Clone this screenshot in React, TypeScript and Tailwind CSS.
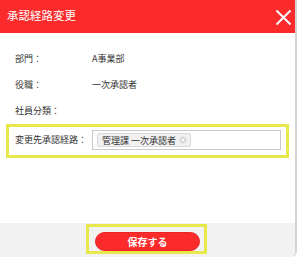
import React from "react";

export default function App() {
  return (
    <div className="w-[300px] h-[257px] bg-white overflow-hidden font-['Noto_Sans_CJK_JP','Liberation_Sans',sans-serif]">
      <div className="w-[297px] h-full flex flex-col border-r-2 border-[#d4d4d4] rounded-br-[6px] overflow-hidden">
        {/* header */}
        <div className="h-[33px] shrink-0 bg-[#fc2b2b] flex items-center justify-between pl-[7px] pr-[3px]">
          <span className="text-white text-[11.5px] leading-none -mt-[2px]">承認経路変更</span>
          <svg width="17" height="17" viewBox="0 0 17 17" className="mt-[1px]">
            <path d="M1.5 1.5 L15.5 15.5 M15.5 1.5 L1.5 15.5" stroke="#fff" strokeWidth="2" fill="none" />
          </svg>
        </div>
        {/* body */}
        <div className="flex-1 bg-white pt-[13px] text-[9px] text-[#333]">
          <div className="h-[26px] flex items-center pl-[15px]">
            <span className="w-[77px]">部門：</span>
            <span>A事業部</span>
          </div>
          <div className="h-[26px] flex items-center pl-[15px]">
            <span className="w-[77px]">役職：</span>
            <span>一次承認者</span>
          </div>
          <div className="h-[26px] flex items-center pl-[15px]">
            <span className="w-[77px]">社員分類：</span>
          </div>
          <div className="mx-[6px] w-[283px] border-[3px] border-[#e8e84c] pt-[3px] pb-[5px] pl-[6px] pr-[5px] flex items-center">
            <span className="w-[77px] shrink-0">変更先承認経路：</span>
            <div className="flex-1 h-[20px] border border-[#c9c9c9] bg-white flex items-center pl-[4px]">
              <div className="h-[14px] flex items-center gap-[3px] bg-[#f1f1f1] border border-[#dadada] rounded-[2px] pl-[4px] pr-[3px] text-[9px] text-[#333]">
                <span className="leading-none">管理課 一次承認者</span>
                <svg width="8" height="8" viewBox="0 0 8 8">
                  <circle cx="4" cy="4" r="3.5" fill="#d6d6d6" />
                  <path d="M2.5 2.5 L5.5 5.5 M5.5 2.5 L2.5 5.5" stroke="#fff" strokeWidth="1" />
                </svg>
              </div>
            </div>
          </div>
        </div>
        {/* footer */}
        <div className="h-[34px] shrink-0 bg-[#f2f2f2] pt-[1px] pl-[86px]">
          <div className="w-[121px] h-[30px] border-[3px] border-[#e8e84c] pt-[5px] pl-[6px]">
            <div className="w-[105px] h-[19px] rounded-full bg-[#fc2b2b] border border-[#e82424] flex items-center justify-center">
              <span className="text-white text-[10px] font-bold leading-none">保存する</span>
            </div>
          </div>
        </div>
      </div>
    </div>
  );
}
